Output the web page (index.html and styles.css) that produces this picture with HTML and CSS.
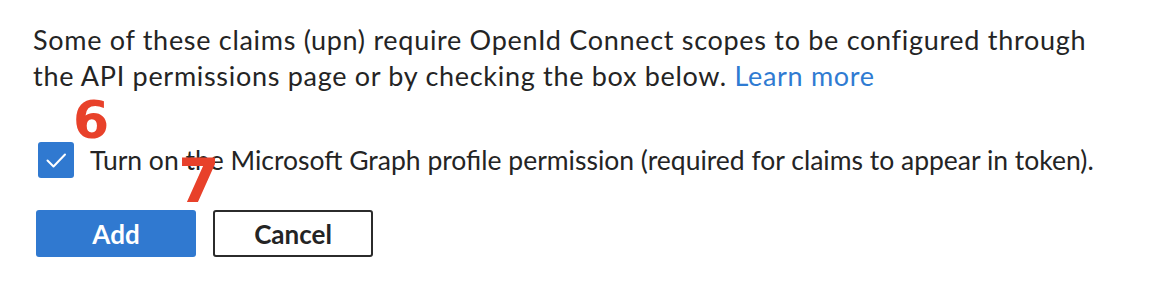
FILE: index.html
```html
<!DOCTYPE html>
<html>
<head>
  <meta charset="UTF-8">
  <meta name="viewport" content="width=device-width, initial-scale=1.0">
  <link rel="stylesheet" href="styles.css">
</head>
<body>
<div class="panel">
  <p class="notice">Some of these claims (upn) require OpenId Connect scopes to be configured through the API permissions page or by checking the box below. <a class="learn" href="#">Learn more</a></p>

  <label class="check-row">
    <span class="box">
      <svg width="36" height="36" viewBox="0 0 36 36"><path d="M9.5 18.5 L15.5 24.5 L27 12.5" fill="none" stroke="#fff" stroke-width="2" stroke-linecap="round" stroke-linejoin="round"/></svg>
    </span>
    <span class="check-text">Turn on the Microsoft Graph profile permission (required for claims to appear in token).</span>
  </label>

  <div class="actions">
    <button class="btn btn-primary">Add</button>
    <button class="btn btn-default">Cancel</button>
  </div>

  <span class="step step-6">6</span>
  <span class="step step-7">7</span>
</div>
</body>
</html>
```

FILE: styles.css
```css
body {
  margin: 0;
  background: #fff;
  font-family: Lato, "Open Sans", sans-serif;
  color: #242424;
}

.panel {
  position: relative;
  padding: 22px 0 0 33px;
  width: 1080px;
}

.notice {
  margin: 0;
  width: 1075px;
  font-size: 27px;
  letter-spacing: 0.7px;
  line-height: 36px;
}

.learn {
  color: #2f7bd2;
  text-decoration: none;
}

.check-row {
  display: flex;
  align-items: center;
  gap: 16px;
  margin-top: 48px;
  padding-left: 5px;
}

.box {
  width: 36px;
  height: 36px;
  border-radius: 3px;
  background: #3079d0;
  display: flex;
  flex-shrink: 0;
}

.check-text {
  font-size: 26.5px;
  line-height: 36px;
}

.actions {
  display: flex;
  gap: 17px;
  margin-top: 32px;
  padding-left: 3px;
}

.btn {
  width: 160px;
  height: 47px;
  border-radius: 3px;
  font-family: Lato, "Open Sans", sans-serif;
  font-size: 26px;
  font-weight: 700;
  cursor: pointer;
}

.btn-primary {
  background: #3079d0;
  border: none;
  color: #fff;
}

.btn-default {
  background: #fff;
  border: 2px solid #2b2b2b;
  color: #242424;
}

.step {
  position: absolute;
  font-family: "DejaVu Sans", sans-serif;
  font-weight: 700;
  line-height: 1;
  color: #e8412a;
}

.step-6 {
  left: 73px;
  top: 94px;
  font-size: 52px;
}

.step-7 {
  left: 178px;
  top: 151px;
  font-size: 60px;
}
```
